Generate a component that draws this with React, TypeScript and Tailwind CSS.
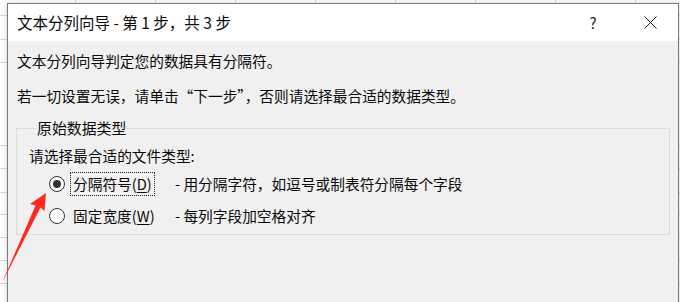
import React from 'react';

// Spreadsheet grid lines visible around the dialog
const rowLines = [15, 39, 62, 145, 168, 192, 214, 237, 260, 283];
const colLines = [75, 155, 235, 315, 395, 475, 555, 635];

function Radio({ checked }: { checked?: boolean }) {
  return (
    <span className="flex h-[16px] w-[16px] shrink-0 items-center justify-center rounded-full border border-[#333333] bg-white">
      {checked && <span className="h-[8px] w-[8px] rounded-full bg-[#333333]" />}
    </span>
  );
}

function OptionRow({
  label,
  hotkey,
  desc,
  checked,
  focused,
}: {
  label: string;
  hotkey: string;
  desc: string;
  checked?: boolean;
  focused?: boolean;
}) {
  return (
    <div className="flex h-[24px] items-center pl-[20px]">
      <Radio checked={checked} />
      <div className="ml-[5px] flex w-[105px] items-center">
        <span
          className={
            focused
              ? 'border border-dotted border-[#222] px-[2px] leading-[22px]'
              : 'border border-transparent px-[2px] leading-[22px]'
          }
        >
          {label}(<span className="underline underline-offset-2">{hotkey}</span>)
        </span>
      </div>
      <span>{desc}</span>
    </div>
  );
}

export default function App() {
  return (
    <div
      className="relative h-[302px] w-[680px] overflow-hidden bg-white text-[#0a0a0a]"
      style={{ fontFamily: '"Noto Sans CJK SC", "Noto Sans", sans-serif' }}
    >
      {/* sheet behind the dialog */}
      {rowLines.map((y) => (
        <div key={y} className="absolute left-0 h-px w-full bg-[#d9d9d9]" style={{ top: y }} />
      ))}
      {colLines.map((x) => (
        <div key={x} className="absolute top-0 h-full w-px bg-[#d9d9d9]" style={{ left: x }} />
      ))}

      {/* dialog window */}
      <div className="absolute left-[7px] top-[3px] h-[320px] w-[672px] border border-[#7a7a7a] bg-[#f0f0f0] shadow-[0_0_6px_rgba(0,0,0,0.18)]">
        <div className="flex h-[37px] items-center bg-white pl-[9px]">
          <span className="text-[15.5px] leading-none">文本分列向导 - 第 1 步，共 3 步</span>
          <div className="ml-auto flex items-center gap-[11px] pr-[5px]">
            <span className="flex w-[46px] justify-center text-[15px] leading-none text-[#222]">?</span>
            <span className="flex w-[46px] justify-center">
              <svg width="13" height="13" viewBox="0 0 13 13">
                <path d="M0.5 0.5 L12.5 12.5 M12.5 0.5 L0.5 12.5" stroke="#111" strokeWidth="1" fill="none" />
              </svg>
            </span>
          </div>
        </div>

        <div className="px-[8px] pt-[10px] text-[14.7px] leading-[20px]">
          <p className="pl-px">文本分列向导判定您的数据具有分隔符。</p>
          <p className="mt-[15px] pl-px">若一切设置无误，请单击“下一步”，否则请选择最合适的数据类型。</p>

          <fieldset className="mt-[12px] border border-[#dcdcdc] pb-[6px] pl-[12px]">
            <legend className="ml-[7px] px-px text-[14.9px] leading-[20px]">原始数据类型</legend>
            <p className="pt-[8px]">请选择最合适的文件类型:</p>
            <div className="mt-[6px]">
              <OptionRow
                label="分隔符号"
                hotkey="D"
                desc="- 用分隔字符，如逗号或制表符分隔每个字段"
                checked
                focused
              />
            </div>
            <div className="mt-[8px]">
              <OptionRow label="固定宽度" hotkey="W" desc="- 每列字段加空格对齐" />
            </div>
          </fieldset>
        </div>
      </div>

      {/* red annotation arrow */}
      <svg className="pointer-events-none absolute left-0 top-0" width="680" height="302">
        <polygon
          points="46,193 44.5,211 40.5,207.5 2,283 35.5,205.5 30,204"
          fill="#ff2a1f"
        />
      </svg>
    </div>
  );
}
